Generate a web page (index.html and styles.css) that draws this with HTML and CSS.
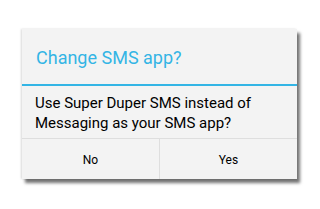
FILE: index.html
```html
<!DOCTYPE html>
<html>
<head>
<meta charset="utf-8">
<link rel="stylesheet" href="styles.css">
</head>
<body>
<div class="stage">
  <div class="dialog">
    <div class="title">Change SMS app?</div>
    <div class="message">Use Super Duper SMS instead of Messaging as your SMS app?</div>
    <div class="buttons">
      <div class="btn">No</div>
      <div class="btn">Yes</div>
    </div>
  </div>
</div>
</body>
</html>
```
FILE: styles.css
```css
html, body {
  margin: 0;
  padding: 0;
  background: #ffffff;
}
.stage {
  width: 320px;
  height: 209px;
  padding: 29px 0 0 22px;
  box-sizing: border-box;
}
.dialog {
  width: 275px;
  height: 150px;
  background: #f3f3f3;
  display: flex;
  flex-direction: column;
  font-family: Roboto, "Liberation Sans", sans-serif;
  box-shadow: 3px 4px 3px rgba(0,0,0,0.55), -1px 0 2px rgba(0,0,0,0.15);
}
.title {
  height: 57px;
  box-sizing: border-box;
  padding: 1px 14px 0;
  display: flex;
  align-items: center;
  color: #33b5e5;
  font-size: 18px;
  border-bottom: 2px solid #33b5e5;
}
.message {
  height: 53px;
  box-sizing: border-box;
  padding: 7px 13px 0;
  font-size: 15px;
  line-height: 20px;
  color: #000;
  border-bottom: 1px solid #dedede;
}
.buttons {
  flex: 1;
  display: flex;
}
.btn {
  flex: 1;
  display: flex;
  align-items: center;
  justify-content: center;
  padding-top: 2px;
  font-size: 12px;
  color: #000;
}
.btn + .btn {
  border-left: 1px solid #dedede;
}
```
